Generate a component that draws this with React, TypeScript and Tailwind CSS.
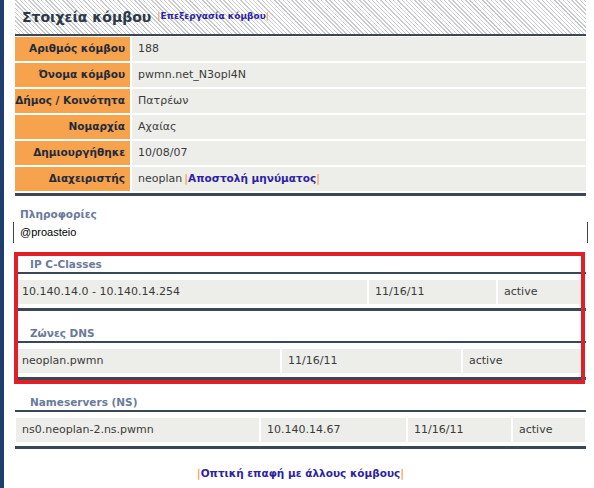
import React from "react";

const infoRows = [
    { label: "Αριθμός κόμβου", value: "188" },
    { label: "Όνομα κόμβου", value: "pwmn.net_N3opl4N" },
    { label: "Δήμος / Κοινότητα", value: "Πατρέων" },
    { label: "Νομαρχία", value: "Αχαίας" },
    { label: "Δημιουργήθηκε", value: "10/08/07" },
];

function Bar() {
    return <span className="text-[#f7a24c] font-bold">|</span>;
}

function App() {
    return (
        <div className="w-[594px] h-[488px] bg-white flex overflow-hidden font-['DejaVu_Sans',sans-serif] text-[#3a3a3a]">
            <div className="w-[4px] shrink-0 bg-[#1d3e6e]" />
            <div className="relative ml-[11px] w-[571px] shrink-0">
                {/* header */}
                <div className="h-[34px] flex items-center pl-[7px] bg-[repeating-linear-gradient(45deg,#c9cdd1_0px,#c9cdd1_1px,#ffffff_1px,#ffffff_3px)]">
                    <h1 className="text-[14px] font-bold text-[#2b3849] mr-[6px]">Στοιχεία κόμβου</h1>
                    <span className="text-[9px] font-bold text-[#2f1fa3]">
                        <Bar />Επεξεργασία κόμβου<Bar />
                    </span>
                </div>
                <div className="h-[2px] bg-[#3b4657]" />

                <div className="mt-[1px] flex flex-col gap-[2px]">
                    {infoRows.map(row => (
                        <InfoRow key={row.label} label={row.label}>{row.value}</InfoRow>
                    ))}
                    <InfoRow label="Διαχειριστής">
                        neoplan <span className="text-[10.5px] font-bold text-[#2f1fa3] ml-[2px]"><Bar />Αποστολή μηνύματος<Bar /></span>
                    </InfoRow>
                </div>
                <div className="mt-[2px] h-[3px] bg-[#3b4657]" />

                <div className="mt-[8px] h-[18px] flex items-center pt-[3px] pl-[5px] text-[10.5px] font-bold text-[#6a7a9c]">
                    Πληροφορίες
                </div>
                <div className="-mx-[2px] h-[21px] flex items-center border-x border-[#444] pl-[6px] text-[11px] text-black font-['Liberation_Sans',sans-serif]">
                    @proasteio
                </div>

                <Section title="IP C-Classes" className="mt-[9px]" cols="grid-cols-[351px_127px_1fr]" cells={["10.140.14.0 - 10.140.14.254", "11/16/11", "active"]} />
                <Section title="Ζώνες DNS" className="mt-[10px]" cols="grid-cols-[264px_179px_1fr]" cells={["neoplan.pwmn", "11/16/11", "active"]} />
                <Section title="Nameservers (NS)" className="mt-[10px]" cols="grid-cols-[243px_145px_103px_1fr]" cells={["ns0.neoplan-2.ns.pwmn", "10.140.14.67", "11/16/11", "active"]} />

                <div className="mt-[13px] h-[20px] flex items-center justify-center pt-[4px] text-[10.5px] font-bold text-[#2f1fa3]">
                    <span><Bar />Οπτική επαφή με άλλους κόμβους<Bar /></span>
                </div>

                {/* red annotation frame drawn over the screenshot */}
                <div className="absolute left-[-1px] top-[252px] w-[571px] h-[132px] border-[4px] border-[#e11f26] pointer-events-none" />
            </div>
        </div>
    );
}

interface InfoRowProps {
    label: string;
    children?: React.ReactNode;
}

function InfoRow({ label, children }: InfoRowProps) {
    return (
        <div className="h-[24px] flex gap-[2px]">
            <div className="w-[115px] shrink-0 bg-[#f7a24c] flex items-center justify-end pr-[5px] text-[10.5px] font-bold text-[#1f2b3b] whitespace-nowrap">
                {label}
            </div>
            <div className="flex-1 bg-[#edeeea] flex items-center pl-[6px] text-[11px] whitespace-nowrap">
                {children}
            </div>
        </div>
    );
}

interface SectionProps {
    title: string;
    cells: string[];
    cols: string;
    className?: string;
}

function Section({ title, cells, cols, className }: SectionProps) {
    return (
        <div className={className}>
            <div className="h-[20px] flex items-center pt-[6px] pl-[15px] text-[10.5px] font-bold text-[#6a7a9c]">{title}</div>
            <div className="h-[2px] bg-[#3b4657]" />
            <div className={`mt-[6px] px-[1px] grid ${cols} gap-[2px]`}>
                {cells.map((c, i) => (
                    <div key={i} className="h-[24px] bg-[#edeeea] flex items-center pl-[6px] text-[11px] whitespace-nowrap">{c}</div>
                ))}
            </div>
            <div className="mt-[4px] h-[3px] bg-[#3b4657]" />
        </div>
    );
}

export default App;
